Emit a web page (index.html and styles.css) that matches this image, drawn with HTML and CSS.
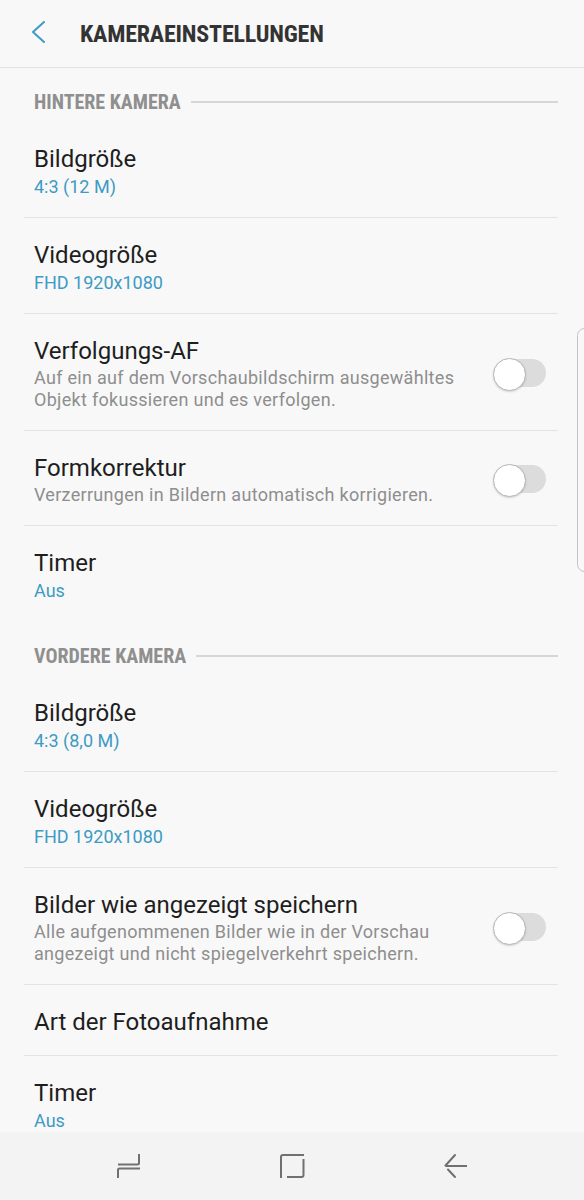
FILE: index.html
```html
<!DOCTYPE html>
<html lang="de">
<head>
  <meta charset="UTF-8" />
  <meta name="viewport" content="width=device-width, initial-scale=1.0" />
  <title>Kameraeinstellungen</title>
  <link rel="stylesheet" href="styles.css">
</head>
<body>
  <div class="screen">
    <header class="topbar">
      <svg class="back" width="16" height="24" viewBox="0 0 16 24">
        <path d="M13 1 L2 11 L13 21" fill="none" stroke="#3d9bc4" stroke-width="2" stroke-linecap="round" stroke-linejoin="round" />
      </svg>
      <h1 class="title">KAMERAEINSTELLUNGEN</h1>
    </header>

    <main class="list">
      <div class="section">
        <span class="section-label">HINTERE KAMERA</span>
        <span class="section-line"></span>
      </div>

      <div class="row">
        <div class="row-text">
          <div class="row-title">Bildgröße</div>
          <div class="row-value">4:3 (12 M)</div>
        </div>
      </div>

      <div class="row">
        <div class="row-text">
          <div class="row-title">Videogröße</div>
          <div class="row-value">FHD 1920x1080</div>
        </div>
      </div>

      <div class="row toggle-row">
        <div class="row-text">
          <div class="row-title">Verfolgungs-AF</div>
          <div class="row-desc">Auf ein auf dem Vorschaubildschirm ausgewähltes Objekt fokussieren und es verfolgen.</div>
        </div>
        <div class="toggle"></div>
      </div>

      <div class="row toggle-row">
        <div class="row-text">
          <div class="row-title">Formkorrektur</div>
          <div class="row-desc">Verzerrungen in Bildern automatisch korrigieren.</div>
        </div>
        <div class="toggle"></div>
      </div>

      <div class="row last">
        <div class="row-text">
          <div class="row-title">Timer</div>
          <div class="row-value">Aus</div>
        </div>
      </div>

      <div class="section">
        <span class="section-label">VORDERE KAMERA</span>
        <span class="section-line"></span>
      </div>

      <div class="row">
        <div class="row-text">
          <div class="row-title">Bildgröße</div>
          <div class="row-value">4:3 (8,0 M)</div>
        </div>
      </div>

      <div class="row">
        <div class="row-text">
          <div class="row-title">Videogröße</div>
          <div class="row-value">FHD 1920x1080</div>
        </div>
      </div>

      <div class="row toggle-row">
        <div class="row-text">
          <div class="row-title">Bilder wie angezeigt speichern</div>
          <div class="row-desc">Alle aufgenommenen Bilder wie in der Vorschau angezeigt und nicht spiegelverkehrt speichern.</div>
        </div>
        <div class="toggle"></div>
      </div>

      <div class="row single">
        <div class="row-text">
          <div class="row-title">Art der Fotoaufnahme</div>
        </div>
      </div>

      <div class="row last">
        <div class="row-text">
          <div class="row-title">Timer</div>
          <div class="row-value">Aus</div>
        </div>
      </div>
    </main>

    <nav class="navbar">
      <svg width="30" height="30" viewBox="0 0 30 30">
        <path d="M24 3 V12 Q24 13.5 22.5 13.5 H3" fill="none" stroke="#707070" stroke-width="2" />
        <path d="M25 17.5 H4.5 Q3 17.5 3 19 V27" fill="none" stroke="#707070" stroke-width="2" />
      </svg>
      <svg width="30" height="30" viewBox="0 0 30 30">
        <path d="M27 4 H6 Q4 4 4 6 V27" fill="none" stroke="#707070" stroke-width="2" />
        <path d="M26.5 8 V24 Q26.5 26 24.5 26 H10" fill="none" stroke="#707070" stroke-width="2" />
      </svg>
      <svg width="30" height="30" viewBox="0 0 30 30">
        <path d="M16 4 L6.5 14.5" fill="none" stroke="#707070" stroke-width="2" stroke-linecap="round" />
        <path d="M6.5 15 H28" fill="none" stroke="#707070" stroke-width="2" />
        <path d="M9 18.5 L16 26" fill="none" stroke="#707070" stroke-width="2" stroke-linecap="round" />
      </svg>
    </nav>

    <div class="edge-handle"></div>
  </div>
</body>
</html>
```

FILE: styles.css
```css
* {
  box-sizing: border-box;
}

body {
  margin: 0;
  font-family: Roboto, 'Noto Sans', sans-serif;
  background: #f8f8f8;
}

.screen {
  position: relative;
  display: flex;
  flex-direction: column;
  height: 1200px;
  overflow: hidden;
}

/* Kopfzeile */
.topbar {
  display: flex;
  align-items: center;
  height: 68px;
  padding-left: 31px;
  border-bottom: 1px solid #e2e2e2;
  flex-shrink: 0;
}

.back {
  margin-top: -2px;
}

.title {
  margin: 0 0 0 33px;
  font-family: 'Roboto Condensed', Roboto, sans-serif;
  font-size: 24px;
  font-weight: 700;
  color: #333;
  letter-spacing: -0.2px;
}

/* Liste */
.list {
  flex: 1;
  overflow: hidden;
  margin: 0 26px 0 24px;
}

.section {
  display: flex;
  align-items: center;
  height: 54px;
  padding: 14px 0 0 10px;
}

.section-label {
  font-family: 'Roboto Condensed', Roboto, sans-serif;
  font-size: 20px;
  font-weight: 700;
  color: #8f8f8f;
}

.section-line {
  flex: 1;
  height: 2px;
  margin-left: 10px;
  background: #d6d6d6;
}

.row {
  display: flex;
  align-items: center;
  padding: 21px 12px 18px 10px;
  border-bottom: 1px solid #e3e3e3;
}

.row.last {
  border-bottom-color: transparent;
}

.row.single {
  padding-bottom: 17px;
}

.toggle-row {
  padding-bottom: 19px;
}

.row-text {
  flex: 1;
}

.row-title {
  font-size: 24px;
  line-height: 32px;
  color: #1e1e1e;
}

.row-value {
  font-size: 18px;
  line-height: 24px;
  color: #3d9bc4;
}

.row-desc {
  font-size: 18px;
  line-height: 22px;
  letter-spacing: 0.3px;
  color: #8e8e8e;
  padding-right: 40px;
}

.toggle {
  position: relative;
  width: 51px;
  height: 28px;
  border-radius: 14px;
  background: #dcdcdc;
  flex-shrink: 0;
}

.toggle::before {
  content: '';
  position: absolute;
  left: -2px;
  top: -1.5px;
  width: 31px;
  height: 31px;
  border-radius: 50%;
  background: #fff;
  border: 1px solid #b5b5b5;
  box-shadow: 0 1px 2px rgba(0, 0, 0, 0.15);
}

/* Navigationsleiste */
.navbar {
  display: flex;
  justify-content: space-between;
  align-items: center;
  height: 68px;
  padding: 0 115px;
  background: #f3f3f3;
  flex-shrink: 0;
}

.edge-handle {
  position: absolute;
  right: -8px;
  top: 328px;
  width: 15px;
  height: 244px;
  border: 1.5px solid #c4c4c4;
  border-radius: 8px;
}
```
